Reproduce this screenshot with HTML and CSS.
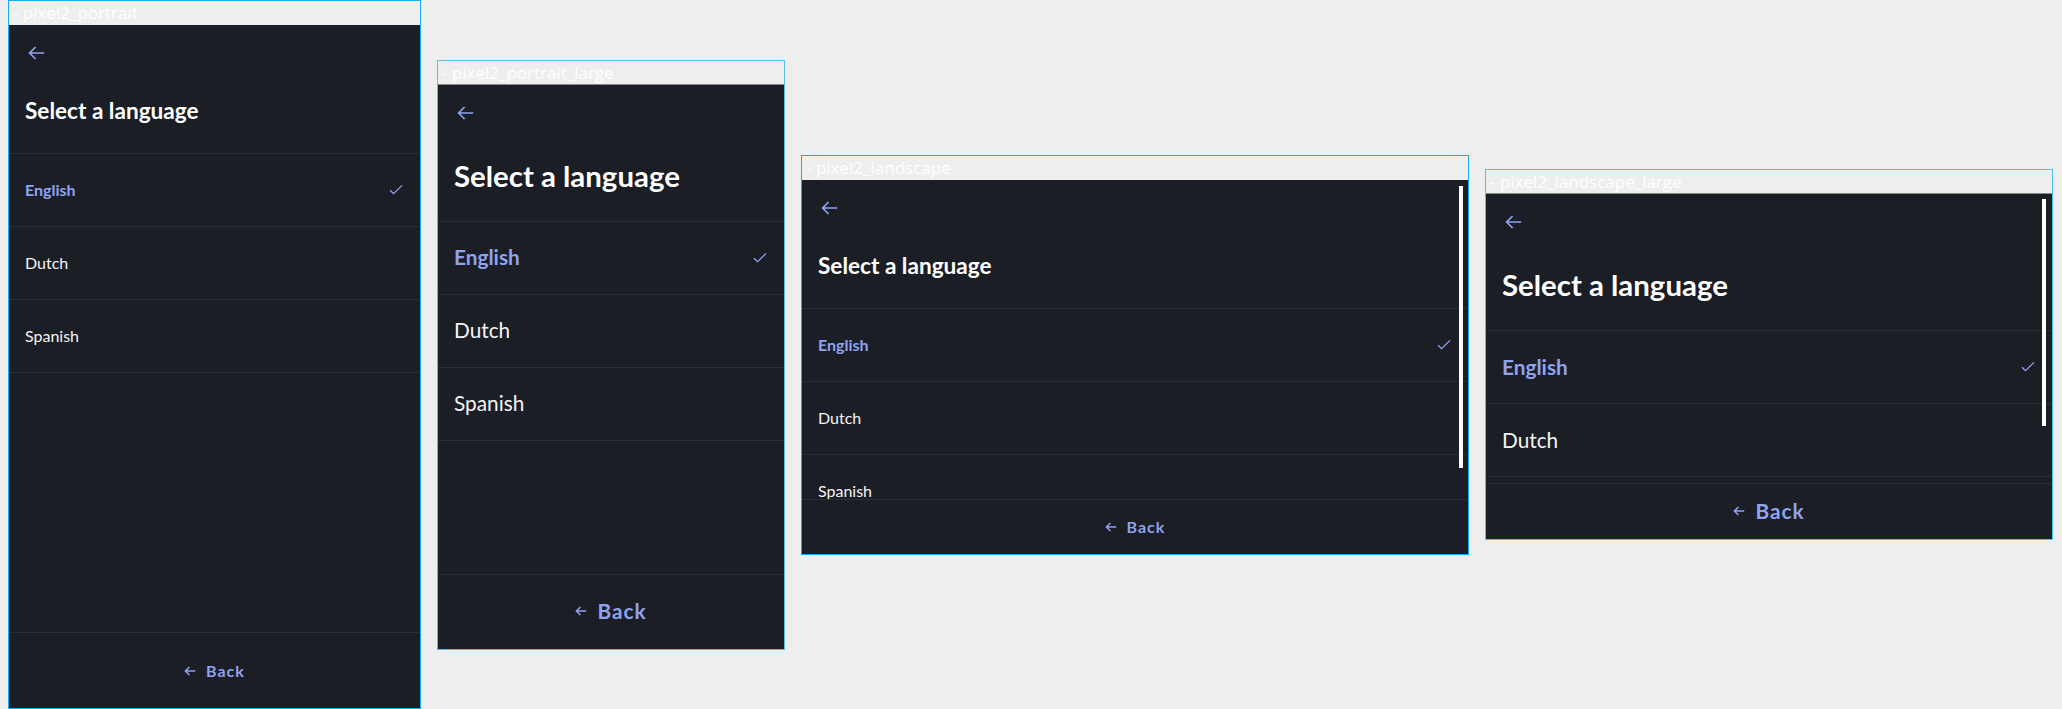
FILE: index.html
```html
<!DOCTYPE html>
<html lang="en">
<head>
<meta charset="utf-8">
<title>Select a language – device goldens</title>
<link rel="stylesheet" href="styles.css">
</head>
<body>
<main class="stage">

  <section class="device device--portrait">
    <div class="device__label">- pixel2_portrait</div>
    <div class="screen">
      <div class="screen__scroll">
        <header class="screen__header">
          <svg class="icon-back" viewBox="0 0 17 14" width="17" height="14"><path d="M16.2 7H1.6M7.6 1 1.6 7l6 6"/></svg>
          <h1 class="screen__title">Select a language</h1>
        </header>
        <ul class="lang-list">
          <li class="lang-item lang-item--selected"><span>English</span><svg class="icon-check" viewBox="0 0 16 16" width="16" height="16"><path d="M2 8.2l3.6 3.5L14 3.4"/></svg></li>
          <li class="lang-item"><span>Dutch</span></li>
          <li class="lang-item"><span>Spanish</span></li>
        </ul>
      </div>
      <footer class="screen__footer">
        <button class="back-btn" type="button"><svg class="icon-back-sm" viewBox="0 0 12 10" width="12" height="10"><path d="M11.2 5H1.4M5.4 1 1.4 5l4 4"/></svg><span>Back</span></button>
      </footer>
    </div>
  </section>

  <section class="device device--portrait-large device--large">
    <div class="device__label">- pixel2_portrait_large</div>
    <div class="screen">
      <div class="screen__scroll">
        <header class="screen__header">
          <svg class="icon-back" viewBox="0 0 17 14" width="17" height="14"><path d="M16.2 7H1.6M7.6 1 1.6 7l6 6"/></svg>
          <h1 class="screen__title">Select a language</h1>
        </header>
        <ul class="lang-list">
          <li class="lang-item lang-item--selected"><span>English</span><svg class="icon-check" viewBox="0 0 16 16" width="16" height="16"><path d="M2 8.2l3.6 3.5L14 3.4"/></svg></li>
          <li class="lang-item"><span>Dutch</span></li>
          <li class="lang-item"><span>Spanish</span></li>
        </ul>
      </div>
      <footer class="screen__footer">
        <button class="back-btn" type="button"><svg class="icon-back-sm" viewBox="0 0 12 10" width="12" height="10"><path d="M11.2 5H1.4M5.4 1 1.4 5l4 4"/></svg><span>Back</span></button>
      </footer>
    </div>
  </section>

  <section class="device device--landscape">
    <div class="device__label">- pixel2_landscape</div>
    <div class="screen">
      <div class="screen__scroll">
        <header class="screen__header">
          <svg class="icon-back" viewBox="0 0 17 14" width="17" height="14"><path d="M16.2 7H1.6M7.6 1 1.6 7l6 6"/></svg>
          <h1 class="screen__title">Select a language</h1>
        </header>
        <ul class="lang-list">
          <li class="lang-item lang-item--selected"><span>English</span><svg class="icon-check" viewBox="0 0 16 16" width="16" height="16"><path d="M2 8.2l3.6 3.5L14 3.4"/></svg></li>
          <li class="lang-item"><span>Dutch</span></li>
          <li class="lang-item"><span>Spanish</span></li>
        </ul>
        <div class="scrollbar"></div>
      </div>
      <footer class="screen__footer">
        <button class="back-btn" type="button"><svg class="icon-back-sm" viewBox="0 0 12 10" width="12" height="10"><path d="M11.2 5H1.4M5.4 1 1.4 5l4 4"/></svg><span>Back</span></button>
      </footer>
    </div>
  </section>

  <section class="device device--landscape-large device--large">
    <div class="device__label">- pixel2_landscape_large</div>
    <div class="screen">
      <div class="screen__scroll">
        <header class="screen__header">
          <svg class="icon-back" viewBox="0 0 17 14" width="17" height="14"><path d="M16.2 7H1.6M7.6 1 1.6 7l6 6"/></svg>
          <h1 class="screen__title">Select a language</h1>
        </header>
        <ul class="lang-list">
          <li class="lang-item lang-item--selected"><span>English</span><svg class="icon-check" viewBox="0 0 16 16" width="16" height="16"><path d="M2 8.2l3.6 3.5L14 3.4"/></svg></li>
          <li class="lang-item"><span>Dutch</span></li>
        </ul>
        <div class="scrollbar"></div>
      </div>
      <footer class="screen__footer">
        <button class="back-btn" type="button"><svg class="icon-back-sm" viewBox="0 0 12 10" width="12" height="10"><path d="M11.2 5H1.4M5.4 1 1.4 5l4 4"/></svg><span>Back</span></button>
      </footer>
    </div>
  </section>

</main>
</body>
</html>
```

FILE: styles.css
```css
* { box-sizing: border-box; }

html, body {
  margin: 0;
  padding: 0;
  background: #eeeeee;
}

body {
  padding: 0 8px;
  font-family: Lato, "Liberation Sans", sans-serif;
}

.stage {
  height: 709px;
  display: flex;
  align-items: center;
  gap: 16px;
}

/* ---------- device frame ---------- */
.device {
  flex: none;
  display: flex;
  flex-direction: column;
  border: 1px solid #12aff5;
  --accent: #8fa3ef;
  --bg: #1c1e26;
  --divider: #2b2e37;
  --title-size: 22.6px;
  --title-gap: 37px;
  --row-size: 16px;
  --header-h: 128px;
  --footer-h: 76px;
}

.device--portrait        { width: 413px; height: 709px; }
.device--portrait-large  { width: 348px; height: 590px; --footer-h: 75px; }
.device--landscape       { width: 668px; height: 400px; --footer-h: 55px; }
.device--landscape-large { width: 568px; height: 371px; --footer-h: 56px; }

.device--large {
  border-color: #52c0f0;
  --title-size: 29.4px;
  --title-gap: 38px;
  --row-size: 20.8px;
  --header-h: 136px;
}

.device__label {
  flex: none;
  height: 24px;
  padding-left: 4px;
  font-family: "Open Sans", "Noto Sans", sans-serif;
  font-size: 17px;
  line-height: 24px;
  color: #ffffff;
  white-space: nowrap;
  overflow: hidden;
}

.device--large .device__label {
  line-height: 23px;
  border-bottom: 1px solid #8a8a8a;
}

/* ---------- screen ---------- */
.screen {
  flex: 1;
  min-height: 0;
  display: flex;
  flex-direction: column;
  background: var(--bg);
  color: #ffffff;
}

.screen__scroll {
  flex: 1;
  min-height: 0;
  overflow: hidden;
  position: relative;
}

.screen__header {
  height: var(--header-h);
  padding: 21px 16px 0;
}

.icon-back {
  display: block;
  margin-left: 3px;
  fill: none;
  stroke: var(--accent);
  stroke-width: 1.7;
  stroke-linejoin: miter;
}

.screen__title {
  margin: var(--title-gap) 0 0;
  font-size: var(--title-size);
  font-weight: 700;
  line-height: 1.2;
  color: #ffffff;
  white-space: nowrap;
}

.lang-list {
  list-style: none;
  margin: 0;
  padding: 0;
}

.lang-item {
  height: 73px;
  border-top: 1px solid var(--divider);
  display: flex;
  align-items: center;
  justify-content: space-between;
  padding: 0 16px;
  font-size: var(--row-size);
  line-height: 1.2;
  color: #f4f4f4;
}

.lang-item:last-child {
  height: 74px;
  border-bottom: 1px solid var(--divider);
}

.lang-item--selected {
  color: var(--accent);
  font-weight: 700;
}

.icon-check {
  flex: none;
  fill: none;
  stroke: var(--accent);
  stroke-width: 1.3;
}

.scrollbar {
  position: absolute;
  right: 5px;
  width: 4px;
  background: #ffffff;
}

.device--landscape .scrollbar       { top: 6px; height: 282px; }
.device--landscape-large .scrollbar { top: 5px; height: 227px; right: 6px; }

/* ---------- footer ---------- */
.screen__footer {
  flex: none;
  height: var(--footer-h);
  border-top: 1px solid var(--divider);
  display: flex;
  align-items: center;
  justify-content: center;
}

.back-btn {
  display: flex;
  align-items: center;
  gap: 10px;
  background: none;
  border: 0;
  padding: 0;
  font-family: inherit;
  font-size: var(--row-size);
  font-weight: 700;
  letter-spacing: 1px;
  line-height: 1.2;
  color: var(--accent);
}

.icon-back-sm {
  display: block;
  fill: none;
  stroke: var(--accent);
  stroke-width: 1.5;
}
```
